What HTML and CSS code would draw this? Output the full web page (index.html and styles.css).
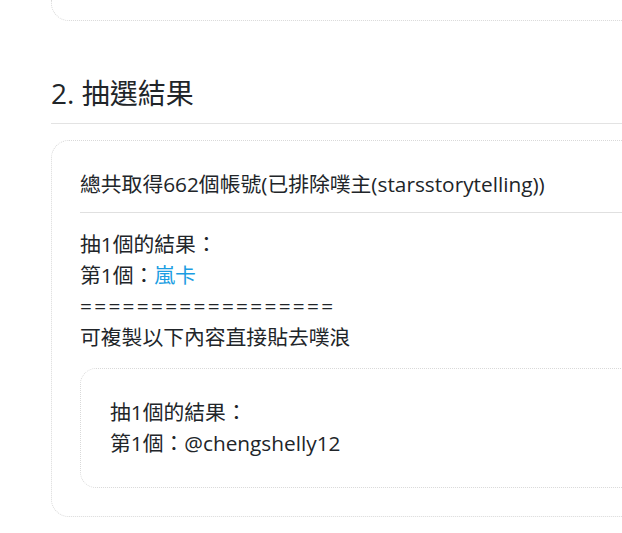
FILE: index.html
```html
<!DOCTYPE html>
<html lang="zh-Hant">
<head>
<meta charset="utf-8">
<title>抽選結果</title>
<link rel="stylesheet" href="styles.css">
</head>
<body>
<div class="page">
  <div class="card card-prev"></div>

  <h2 class="section-title">2. 抽選結果</h2>

  <div class="card card-result">
    <div class="summary">總共取得662個帳號(已排除噗主(starsstorytelling))</div>
    <hr class="divider">
    <div class="result-lines">
      <div>抽1個的結果：</div>
      <div>第1個：<a class="user-link" href="#">嵐卡</a></div>
      <div class="separator">==================</div>
      <div>可複製以下內容直接貼去噗浪</div>
    </div>
    <div class="copy-box">
      <div>抽1個的結果：</div>
      <div>第1個：@chengshelly12</div>
    </div>
  </div>
</div>
</body>
</html>
```

FILE: styles.css
```css
html, body {
  margin: 0;
  padding: 0;
  background: #ffffff;
  overflow: hidden;
}

body {
  font-family: "Open Sans", "Noto Sans CJK TC", sans-serif;
  color: #212529;
  font-size: 20.8px;
  line-height: 1.5;
}

.page {
  width: 700px;
  padding-left: 51px;
}

.card {
  border: 1px dotted #d9d9d9;
  border-radius: 18px;
  background: #fff;
}

.card-prev {
  height: 20px;
  border-top: none;
  border-top-left-radius: 0;
  border-top-right-radius: 0;
}

.section-title {
  margin: 56px 0 16px 0;
  padding-bottom: 12px;
  border-bottom: 1px solid #e3e3e3;
  font-size: 28px;
  font-weight: 400;
  line-height: 1.2;
}

.card-result {
  padding: 28px 29px 28px 28px;
}

.divider {
  border: none;
  border-top: 1px solid #e0e0e0;
  margin: 12px 0 16px 0;
}

.user-link {
  color: #1b9de2;
  text-decoration: none;
}

.separator {
  letter-spacing: 2.3px;
}

.copy-box {
  margin-top: 14px;
  border: 1px dotted #d9d9d9;
  border-radius: 16px;
  padding: 28px 29px;
}
```
